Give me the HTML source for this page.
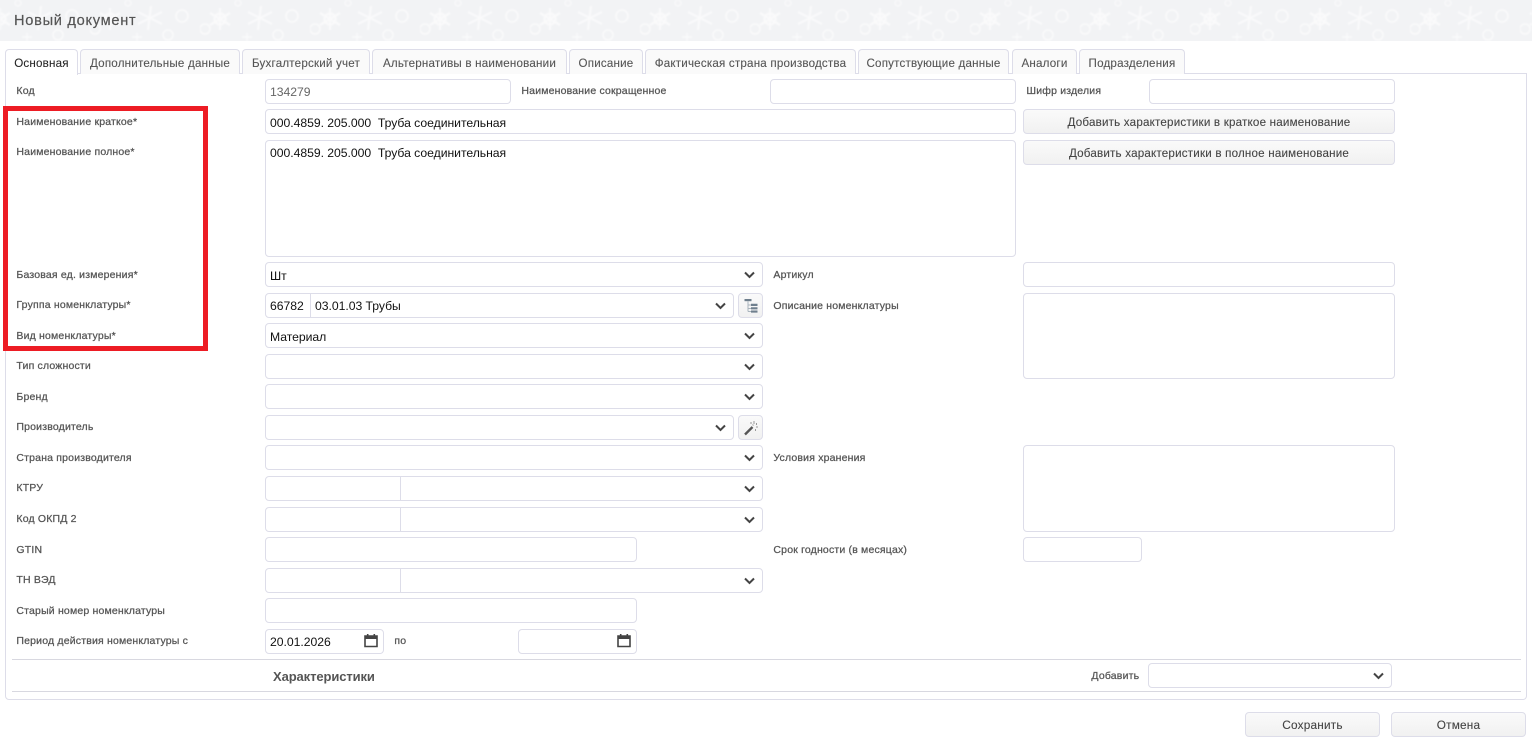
<!DOCTYPE html>
<html lang="ru"><head><meta charset="utf-8"><title>Новый документ</title>
<style>
html,body{margin:0;padding:0;background:#fff}
body{width:1532px;height:743px;position:relative;overflow:hidden;font-family:"Liberation Sans",Arial,sans-serif;color:#222}
.a{position:absolute;box-sizing:border-box}
.l{position:absolute;font-size:10.5px;line-height:16px;height:16px;color:#555;white-space:pre;letter-spacing:.18px;-webkit-text-stroke:.25px #555;margin-left:-.6px;margin-top:1px}
.i{position:absolute;box-sizing:border-box;background:#fff;border:1px solid #dddde9;border-radius:4px;height:25px;font-size:12.2px;line-height:25px;padding-left:4px;color:#111;white-space:pre;letter-spacing:-.03px}
.d{position:absolute;top:0;bottom:0;width:1px;background:#dddde9}
.t{position:absolute;box-sizing:border-box;top:49px;height:25px;background:#fafafa;border:1px solid #dddde9;border-bottom:none;border-radius:4px 4px 0 0;font-size:11.6px;line-height:27px;text-align:center;color:#555;white-space:pre;letter-spacing:.2px;-webkit-text-stroke:.1px #555}
.b{position:absolute;box-sizing:border-box;height:25px;border:1px solid #dddde9;border-radius:4px;background:linear-gradient(#fafafa,#f1f1f1);font-size:11.6px;line-height:25px;text-align:center;color:#444;white-space:pre;letter-spacing:.2px;-webkit-text-stroke:.1px #444}
svg.c{position:absolute;right:7px;top:8px}
svg.ic{position:absolute}
.h{position:absolute;height:1px;background:#d8d8e0;left:12px;width:1509px}
</style></head><body>
<svg class="a" style="left:0;top:0" width="1532" height="41" xmlns="http://www.w3.org/2000/svg">
<defs>
<filter id="bl" x="0" y="0" width="100%" height="100%"><feGaussianBlur stdDeviation=".7"/></filter>
<pattern id="p" x="-20" y="0" width="110" height="41" patternUnits="userSpaceOnUse">
<g stroke="#fafafb" stroke-width="2.2" fill="none">
<path d="M20 8v22M10 13l20 12M30 13L10 25"/><circle cx="20" cy="19" r="5.5"/>
<path d="M61 6l-3 24M48 12l24 12M72 12L48 24" stroke-width="2"/>
<circle cx="92" cy="16" r="6" stroke-width="1.6"/><circle cx="5" cy="29" r="5" stroke-width="1.5"/>
<path d="M47 33v8M42 37h10" stroke-width="1.4"/><circle cx="78" cy="35" r="5" stroke-width="1.5"/><circle cx="38" cy="3" r="3" stroke-width="1.2"/>
</g></pattern></defs>
<rect width="1532" height="41" fill="#f2f3f5"/>
<rect width="1532" height="41" fill="url(#p)" filter="url(#bl)"/></svg>
<div class="a" style="left:14px;top:11px;font-size:14.6px;line-height:20px;color:#555;letter-spacing:.72px;-webkit-text-stroke:.2px #555">Новый документ</div>

<div class="a" style="left:5px;top:73px;width:1522px;height:627px;border:1px solid #dddde9;border-radius:0 0 4px 4px"></div>
<div class="t" style="left:5px;width:73px;background:#fff;color:#222;height:26px">Основная</div>
<div class="t" style="left:80px;width:160px">Дополнительные данные</div>
<div class="t" style="left:242px;width:128px">Бухгалтерский учет</div>
<div class="t" style="left:372px;width:195px">Альтернативы в наименовании</div>
<div class="t" style="left:569px;width:74px">Описание</div>
<div class="t" style="left:645px;width:211px">Фактическая страна производства</div>
<div class="t" style="left:858px;width:151px">Сопутствующие данные</div>
<div class="t" style="left:1012px;width:65px">Аналоги</div>
<div class="t" style="left:1079px;width:106px">Подразделения</div>

<div class="l" style="left:17px;top:82px">Код</div>
<div class="l" style="left:17px;top:113px">Наименование краткое*</div>
<div class="l" style="left:17px;top:143px">Наименование полное*</div>
<div class="l" style="left:17px;top:266px">Базовая ед. измерения*</div>
<div class="l" style="left:17px;top:296px">Группа номенклатуры*</div>
<div class="l" style="left:17px;top:327px">Вид номенклатуры*</div>
<div class="l" style="left:17px;top:357px">Тип сложности</div>
<div class="l" style="left:17px;top:388px">Бренд</div>
<div class="l" style="left:17px;top:418px">Производитель</div>
<div class="l" style="left:17px;top:449px">Страна производителя</div>
<div class="l" style="left:17px;top:479px">КТРУ</div>
<div class="l" style="left:17px;top:510px">Код ОКПД 2</div>
<div class="l" style="left:17px;top:541px">GTIN</div>
<div class="l" style="left:17px;top:571px">ТН ВЭД</div>
<div class="l" style="left:17px;top:602px">Старый номер номенклатуры</div>
<div class="l" style="left:17px;top:632px">Период действия номенклатуры с</div>
<div class="l" style="left:522px;top:82px">Наименование сокращенное</div>
<div class="l" style="left:1027px;top:82px">Шифр изделия</div>
<div class="l" style="left:774px;top:266px">Артикул</div>
<div class="l" style="left:774px;top:297px">Описание номенклатуры</div>
<div class="l" style="left:774px;top:449px">Условия хранения</div>
<div class="l" style="left:774px;top:541px">Срок годности (в месяцах)</div>
<div class="l" style="left:395px;top:632px">по</div>
<div class="l" style="left:1092px;top:667px">Добавить</div>

<div class="i" style="left:265px;top:79px;width:246px;color:#666">134279</div>
<div class="i" style="left:770px;top:79px;width:246px"></div>
<div class="i" style="left:1149px;top:79px;width:246px"></div>
<div class="i" style="left:265px;top:109px;width:751px;line-height:26px">000.4859. 205.000  Труба соединительная</div>
<div class="i" style="left:265px;top:140px;width:751px;height:117px">000.4859. 205.000  Труба соединительная</div>
<div class="b" style="left:1023px;top:109px;width:372px">Добавить характеристики в краткое наименование</div>
<div class="b" style="left:1023px;top:140px;width:372px">Добавить характеристики в полное наименование</div>

<div class="i" style="left:265px;top:262px;width:498px;line-height:26px">Шт<svg class="c" width="11" height="8" viewBox="0 0 11 8"><path d="M1 1.5l4.5 4.5L10 1.5" fill="none" stroke="#444" stroke-width="2"/></svg></div>
<div class="i" style="left:265px;top:293px;width:469px">66782<span class="d" style="left:44px"></span><span style="position:absolute;left:49px">03.01.03 Трубы</span><svg class="c" width="11" height="8" viewBox="0 0 11 8"><path d="M1 1.5l4.5 4.5L10 1.5" fill="none" stroke="#444" stroke-width="2"/></svg></div>
<div class="b" style="left:738px;top:293px;width:25px"><svg class="ic" style="left:4px;top:4px" width="16" height="16" viewBox="0 0 16 16"><path d="M1.5 1h7v2.2h-7z" fill="#6f7f8d"/><path d="M5 3.2V13.5M5 7h3M5 10.5h3M5 13.5h3" stroke="#a9b4bd" stroke-width="1" fill="none"/><path d="M8 5.8h6.5V8H8zM8 9.3h6.5v2.1H8zM8 12.5h6.5v2.1H8z" fill="#6f7f8d"/></svg></div>
<div class="i" style="left:265px;top:323px;width:498px;line-height:27px">Материал<svg class="c" width="11" height="8" viewBox="0 0 11 8"><path d="M1 1.5l4.5 4.5L10 1.5" fill="none" stroke="#444" stroke-width="2"/></svg></div>
<div class="i" style="left:265px;top:354px;width:498px"><svg class="c" width="11" height="8" viewBox="0 0 11 8"><path d="M1 1.5l4.5 4.5L10 1.5" fill="none" stroke="#444" stroke-width="2"/></svg></div>
<div class="i" style="left:265px;top:384px;width:498px"><svg class="c" width="11" height="8" viewBox="0 0 11 8"><path d="M1 1.5l4.5 4.5L10 1.5" fill="none" stroke="#444" stroke-width="2"/></svg></div>
<div class="i" style="left:265px;top:415px;width:469px"><svg class="c" width="11" height="8" viewBox="0 0 11 8"><path d="M1 1.5l4.5 4.5L10 1.5" fill="none" stroke="#444" stroke-width="2"/></svg></div>
<div class="b" style="left:738px;top:415px;width:25px"><svg class="ic" style="left:4px;top:4px" width="16" height="16" viewBox="0 0 16 16"><path d="M2 14.5l7.5-7.5" stroke="#555" stroke-width="2.4" fill="none"/><path d="M11 1v3M13.5 3v2M15 7h-2M8 2v2M12.5 9v2M9.5 4.5l1 1" stroke="#999" stroke-width="1" fill="none"/></svg></div>
<div class="i" style="left:265px;top:445px;width:498px"><svg class="c" width="11" height="8" viewBox="0 0 11 8"><path d="M1 1.5l4.5 4.5L10 1.5" fill="none" stroke="#444" stroke-width="2"/></svg></div>
<div class="i" style="left:265px;top:476px;width:498px"><span class="d" style="left:134px"></span><svg class="c" width="11" height="8" viewBox="0 0 11 8"><path d="M1 1.5l4.5 4.5L10 1.5" fill="none" stroke="#444" stroke-width="2"/></svg></div>
<div class="i" style="left:265px;top:507px;width:498px"><span class="d" style="left:134px"></span><svg class="c" width="11" height="8" viewBox="0 0 11 8"><path d="M1 1.5l4.5 4.5L10 1.5" fill="none" stroke="#444" stroke-width="2"/></svg></div>
<div class="i" style="left:265px;top:537px;width:372px"></div>
<div class="i" style="left:265px;top:568px;width:498px"><span class="d" style="left:134px"></span><svg class="c" width="11" height="8" viewBox="0 0 11 8"><path d="M1 1.5l4.5 4.5L10 1.5" fill="none" stroke="#444" stroke-width="2"/></svg></div>
<div class="i" style="left:265px;top:598px;width:372px"></div>
<div class="i" style="left:265px;top:629px;width:119px">20.01.2026<svg class="ic" style="left:98px;top:3px" width="14" height="15" viewBox="0 0 14 15"><path d="M1 3h12v10.5H1z" fill="none" stroke="#444" stroke-width="1.6"/><path d="M1 3h12v3H1z" fill="#444"/><path d="M3.7 1v3M10.3 1v3" stroke="#444" stroke-width="1.6"/></svg></div>
<div class="i" style="left:518px;top:629px;width:119px"><svg class="ic" style="left:98px;top:3px" width="14" height="15" viewBox="0 0 14 15"><path d="M1 3h12v10.5H1z" fill="none" stroke="#444" stroke-width="1.6"/><path d="M1 3h12v3H1z" fill="#444"/><path d="M3.7 1v3M10.3 1v3" stroke="#444" stroke-width="1.6"/></svg></div>

<div class="i" style="left:1023px;top:262px;width:372px"></div>
<div class="i" style="left:1023px;top:293px;width:372px;height:86px"></div>
<div class="i" style="left:1023px;top:445px;width:372px;height:87px"></div>
<div class="i" style="left:1023px;top:537px;width:119px"></div>

<div class="h" style="top:659px"></div>
<div class="h" style="top:691px"></div>
<div class="a" style="left:273px;top:668px;font-size:13px;line-height:17px;font-weight:bold;color:#555;letter-spacing:-.1px">Характеристики</div>
<div class="i" style="left:1148px;top:663px;width:244px"><svg class="c" width="11" height="8" viewBox="0 0 11 8"><path d="M1 1.5l4.5 4.5L10 1.5" fill="none" stroke="#444" stroke-width="2"/></svg></div>

<div class="b" style="left:1245px;top:712px;width:135px;font-size:11.8px">Сохранить</div>
<div class="b" style="left:1391px;top:712px;width:135px;font-size:11.8px">Отмена</div>

<div class="a" style="left:3px;top:106px;width:205px;height:245px;border:5px solid #ed1c24"></div>
</body></html>
